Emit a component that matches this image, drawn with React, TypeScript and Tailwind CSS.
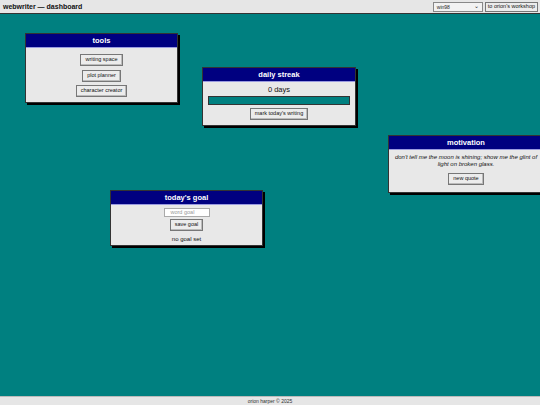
import React from "react";

const font = { fontFamily: '"Liberation Sans", Arial, sans-serif' };

function Btn({ children }: { children: React.ReactNode }) {
  return (
    <button className="h-[12px] px-[4px] bg-[#ececec] border border-[#777] text-[5.5px] leading-none text-[#111] shadow-[inset_-1px_-1px_0_#bbb]">
      {children}
    </button>
  );
}

function Win({
  title,
  className,
  children,
}: {
  title: string;
  className: string;
  children: React.ReactNode;
}) {
  return (
    <div className={"absolute bg-[#e8e8e8] border border-[#333] shadow-[2px_2px_0_#000] " + className}>
      <div className="h-[14px] bg-[#000080] text-white font-bold text-[7.5px] flex items-center justify-center border-b border-[#9a9ae0]">
        {title}
      </div>
      {children}
    </div>
  );
}

export default function App() {
  return (
    <div style={font} className="w-[540px] h-[405px] flex flex-col bg-[#008080] overflow-hidden text-[6px] leading-[8px]">
      <div className="h-[14px] shrink-0 bg-[#e6e6e6] border-b border-[#333] flex items-center justify-between pl-[3px] pr-[2px]">
        <span className="text-[7px] font-bold text-[#111]">webwriter — dashboard</span>
        <div className="flex items-center gap-[2px]">
          <div className="w-[50px] h-[10px] bg-[#f2f2f2] border border-[#888] flex items-center justify-between px-[3px] text-[5px] text-[#222]">
            <span>win98</span>
            <span className="text-[6px] leading-none -mt-[2px]">⌄</span>
          </div>
          <button className="h-[10px] px-[2px] bg-[#ececec] border border-[#777] text-[5.5px] leading-none text-[#111]">
            to orion's workshop
          </button>
        </div>
      </div>
      <div className="relative flex-1">
        <Win title="tools" className="left-[25px] top-[19px] w-[153px] h-[70px]">
          <div className="flex flex-col items-center gap-[3.5px] pt-[6px]">
            <Btn>writing space</Btn>
            <Btn>plot planner</Btn>
            <Btn>character creator</Btn>
          </div>
        </Win>
        <Win title="daily streak" className="left-[202px] top-[53px] w-[154px] h-[59px]">
          <div className="flex flex-col items-center px-[5px]">
            <div className="text-[7.5px] text-[#111] mt-[3px] leading-[10px]">0 days</div>
            <div className="w-full h-[9px] bg-[#008080] border border-[#333] mt-[1px]" />
            <div className="mt-[3px] flex">
              <Btn>mark today's writing</Btn>
            </div>
          </div>
        </Win>
        <Win title="motivation" className="left-[388px] top-[121px] w-[156px] h-[58px]">
          <div className="flex flex-col items-center px-[5px]">
            <div className="text-[6px] italic text-[#111] text-center leading-[7px] mt-[4px]">
              don't tell me the moon is shining; show me the glint of light on broken glass.
            </div>
            <div className="mt-[5px] flex">
              <Btn>new quote</Btn>
            </div>
          </div>
        </Win>
        <Win title="today's goal" className="left-[110px] top-[176px] w-[153px] h-[56px]">
          <div className="flex flex-col items-center">
            <div className="mt-[3px] w-[46px] h-[9px] bg-white border border-[#aaa] text-[5.5px] text-[#999] leading-none flex items-center pl-[6px]">
              word goal
            </div>
            <div className="mt-[2px] flex">
              <Btn>save goal</Btn>
            </div>
            <div className="text-[6px] leading-[8px] text-[#111] mt-[4px]">no goal set</div>
          </div>
        </Win>
      </div>
      <div className="h-[9px] shrink-0 bg-[#e6e6e6] border-t border-[#bbb] flex items-center justify-center text-[5px] text-[#333]">
        orion harper © 2025
      </div>
    </div>
  );
}
